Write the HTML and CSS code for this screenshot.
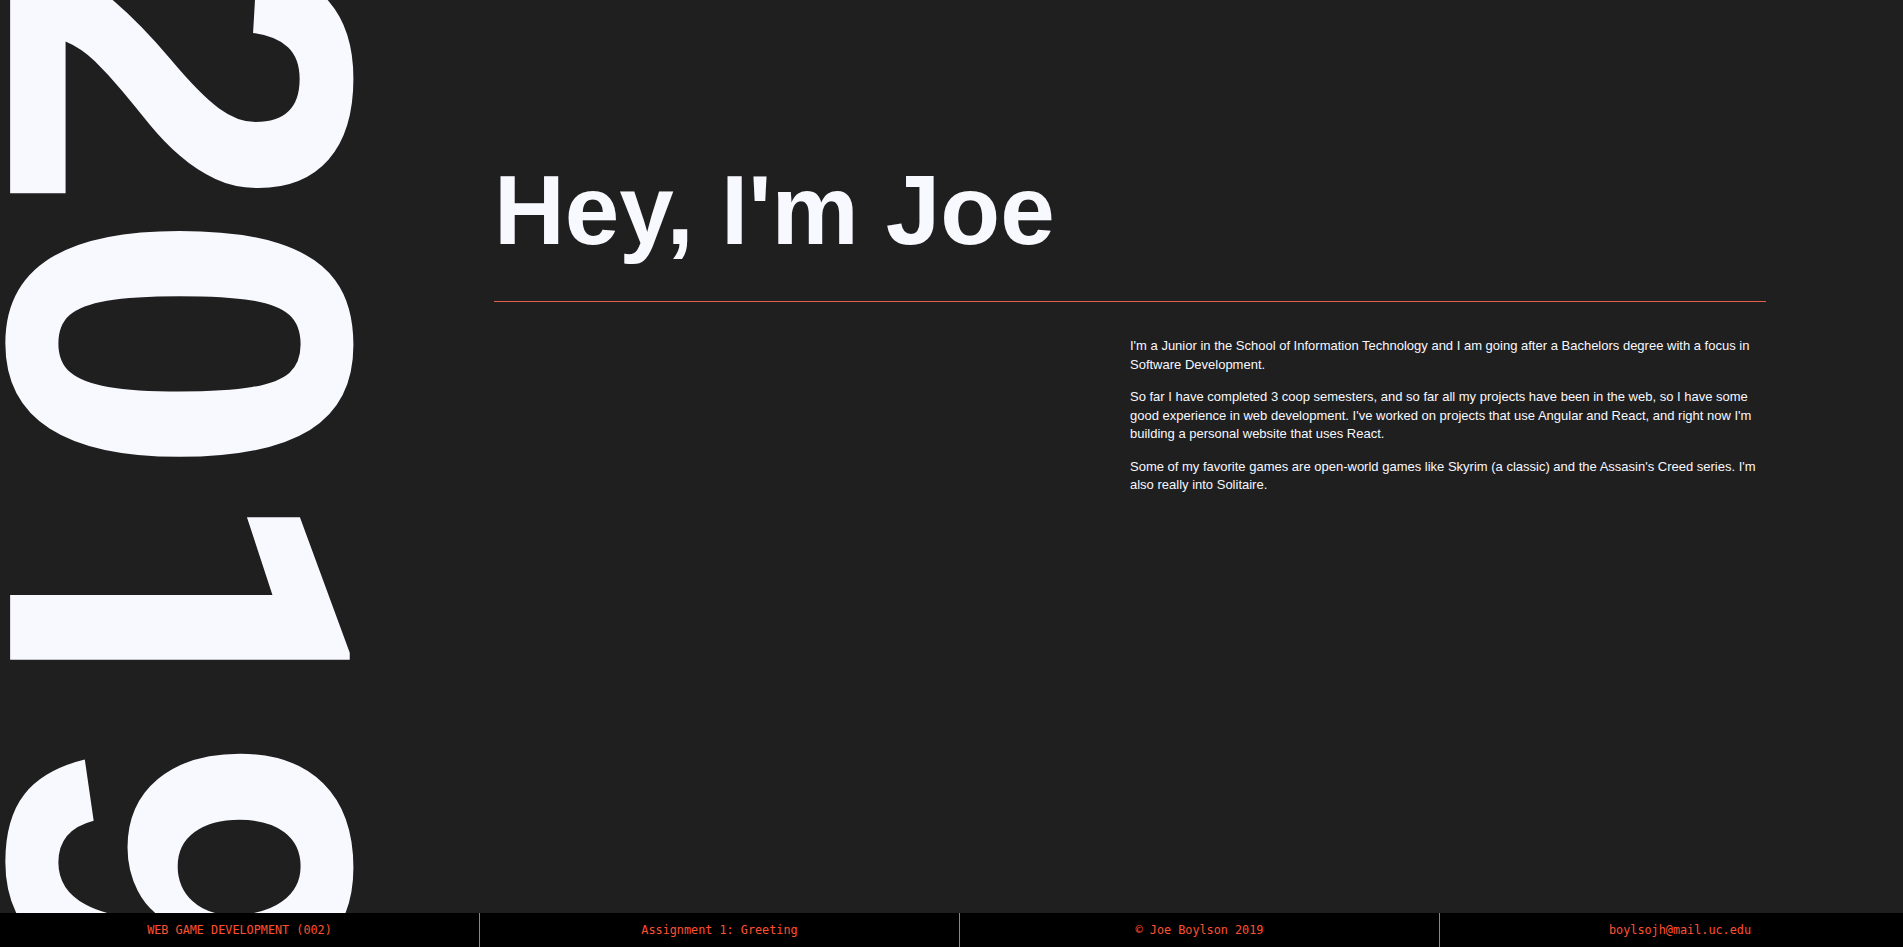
FILE: index.html
```html
<!DOCTYPE html>
<html lang="en">
<head>
<meta charset="utf-8">
<title>Hey, I'm Joe</title>
<link rel="stylesheet" href="styles.css">
</head>
<body>
<div class="page">
  <div class="stage">
    <aside class="year">
      <div class="year-text">20<span class="year-one">1</span>9</div>
    </aside>
    <main class="content">
      <h1 class="title">Hey, I'm Joe</h1>
      <hr class="rule">
      <div class="cols">
        <div class="col-empty"></div>
        <div class="bio">
          <p>I'm a Junior in the School of Information Technology and I am going after a Bachelors degree with a focus in Software Development.</p>
          <p>So far I have completed 3 coop semesters, and so far all my projects have been in the web, so I have some good experience in web development. I've worked on projects that use Angular and React, and right now I'm building a personal website that uses React.</p>
          <p>Some of my favorite games are open-world games like Skyrim (a classic) and the Assasin's Creed series. I'm also really into Solitaire.</p>
        </div>
      </div>
    </main>
  </div>
  <footer class="footer">
    <div class="footer-cell">WEB GAME DEVELOPMENT (002)</div>
    <div class="footer-cell">Assignment 1: Greeting</div>
    <div class="footer-cell">© Joe Boylson 2019</div>
    <div class="footer-cell">boylsojh@mail.uc.edu</div>
  </footer>
</div>
</body>
</html>
```

FILE: styles.css
```css
html, body {
  margin: 0;
  padding: 0;
  background: #1f1f1f;
  overflow: hidden;
}

.page {
  display: flex;
  flex-direction: column;
  height: 100vh;
}

.stage {
  flex: 1 1 auto;
  min-height: 0;
  display: flex;
  align-items: flex-start;
  overflow: hidden;
}

.year {
  flex: none;
  width: 349px;
  height: 100%;
}

.year-text {
  width: 1100px;
  height: 349px;
  transform-origin: 0 0;
  transform: translate(361px, -52px) rotate(90deg) scale(1, 1.035);
  white-space: nowrap;
  font-family: "Liberation Sans", Arial, sans-serif;
  font-weight: bold;
  font-size: 475px;
  line-height: 349px;
  color: #f8f8ff;
}

.year-one {
  font-family: Roboto, "Liberation Sans", sans-serif;
  font-size: 0.97em;
  margin-left: 3px;
  letter-spacing: -6.5px;
}

.content {
  flex: 0 0 1272px;
  margin-left: 145px;
  padding-top: 160px;
  color: #f8f8ff;
  font-family: "Liberation Sans", Arial, sans-serif;
}

.title {
  margin: 0;
  font-size: 98px;
  line-height: 100px;
  font-weight: bold;
  color: #f8f8ff;
}

.rule {
  margin: 41px 0 0;
  border: 0;
  height: 1px;
  background: #e5604c;
}

.cols {
  display: grid;
  grid-template-columns: 1fr 1fr;
  margin-top: 35px;
}

.bio p {
  margin: 0 0 14px;
  font-size: 13px;
  line-height: 18.5px;
}

.footer {
  flex: none;
  height: 34px;
  background: #000;
  display: grid;
  grid-template-columns: repeat(4, 480px);
  overflow: hidden;
}

.footer-cell {
  display: flex;
  align-items: center;
  justify-content: center;
  box-sizing: border-box;
  border-right: 1px solid #f0603f;
  font-family: "DejaVu Sans Mono", "Liberation Mono", monospace;
  font-size: 11.8px;
  color: #ff5030;
  white-space: nowrap;
}

.footer-cell:last-child {
  border-right: 0;
}
```
